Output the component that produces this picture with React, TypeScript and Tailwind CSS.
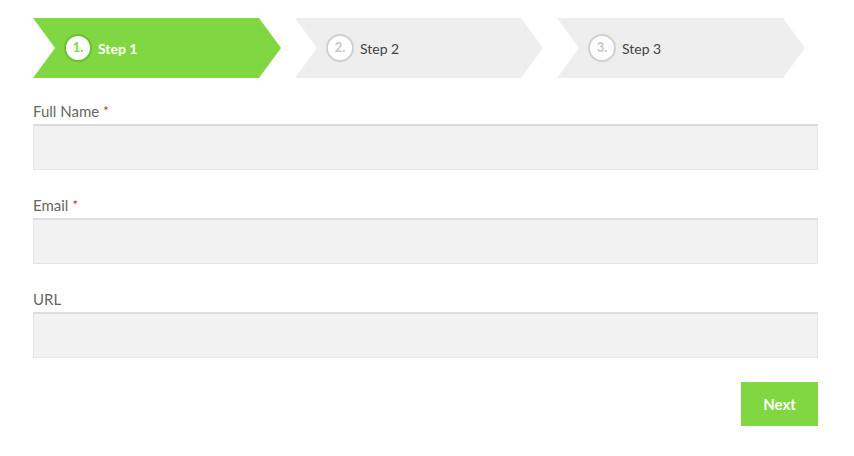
import React from 'react';

const steps = [
  { n: 1, label: 'Step 1', active: true },
  { n: 2, label: 'Step 2', active: false },
  { n: 3, label: 'Step 3', active: false },
];

const fields = [
  { label: 'Full Name', required: true },
  { label: 'Email', required: true },
  { label: 'URL', required: false },
];

const App = () => {
  return (
    <div className="w-[854px] h-[456px] bg-white font-['Lato','Open_Sans',sans-serif]">
      <div className="pl-[33px] pr-[36px] pt-[18px]">
        {/* steps */}
        <div className="flex gap-[14px] w-[772px]">
          {steps.map((s) => (
            <div
              key={s.n}
              className={`flex-1 h-[60px] flex items-center pl-[31px] [clip-path:polygon(0_0,calc(100%-22px)_0,100%_50%,calc(100%-22px)_100%,0_100%,22px_50%)] ${
                s.active ? 'bg-[#81d742]' : 'bg-[#eeeeee]'
              }`}
            >
              <span
                className={`w-[28px] h-[28px] rounded-full bg-white flex items-center justify-center text-[13px] border-2 ${
                  s.active ? 'border-[#6cc02f] text-[#81d742] font-bold' : 'border-[#d0d0d0] text-[#c8c8c8] font-bold'
                }`}
              >
                {s.n}.
              </span>
              <span
                className={`ml-[6px] text-[14px] ${s.active ? 'text-white font-bold' : 'text-[#444]'}`}
              >
                {s.label}
              </span>
            </div>
          ))}
        </div>

        {/* fields */}
        <div className="mt-[23px] flex flex-col gap-[25px]">
          {fields.map((f) => (
            <div key={f.label} className="flex flex-col gap-[3px]">
              <label className="text-[15px] leading-[20px] text-[#666]">
                {f.label}
                {f.required && <span className="text-[#e02020] text-[13px] ml-[4px] align-top">*</span>}
              </label>
              <input
                type="text"
                className="h-[46px] w-full bg-[#f2f2f2] border border-[#e6e6e6] border-t-2 border-t-[#dddddd] outline-none"
              />
            </div>
          ))}
        </div>

        <div className="flex justify-end mt-[24px]">
          <button className="w-[77px] h-[44px] bg-[#81d742] text-white font-bold text-[15px]">Next</button>
        </div>
      </div>
    </div>
  );
};

export default App;
